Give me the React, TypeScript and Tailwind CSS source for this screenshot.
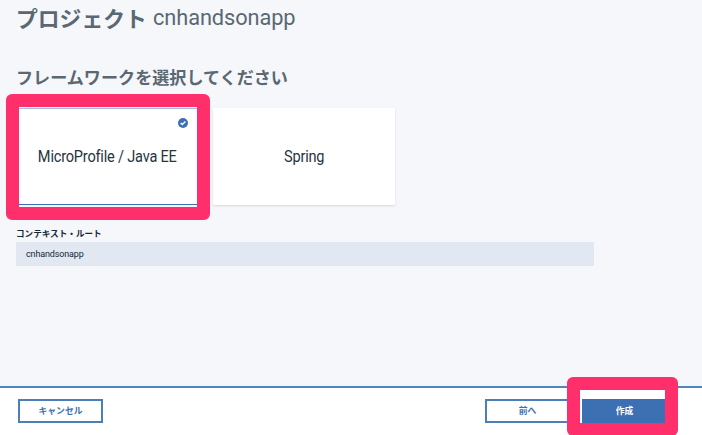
import type { ReactNode } from 'react';

const jp = "font-['Noto_Sans_CJK_JP',sans-serif]";
const latin = "font-['Roboto','Noto_Sans_CJK_JP',sans-serif]";

function CheckBadge() {
  return (
    <svg className="absolute right-[10px] top-[9px] size-[10px]" viewBox="0 0 10 10" fill="none">
      <circle cx="5" cy="5" r="5" fill="#3d70b2" />
      <path d="M2.7 5.1 4.3 6.6 7.4 3.5" stroke="#fff" strokeWidth="1.4" />
    </svg>
  );
}

function FrameworkCard({ selected = false, children }: { selected?: boolean; children: ReactNode }) {
  return (
    <div
      className={`relative flex h-[97px] w-[182px] items-center justify-center bg-white text-[16px] leading-none text-[#26343f] ${latin} ${
        selected ? 'border-b border-t border-b-[#3d70b2] border-t-[#a3bedb]' : 'shadow-[0_1px_2px_rgba(0,0,0,0.12)]'
      }`}
    >
      <span className="inline-block scale-x-[0.91] whitespace-nowrap tracking-[-0.22px]">{children}</span>
      {selected && <CheckBadge />}
    </div>
  );
}

export default function App() {
  return (
    <div className="relative flex h-[435px] w-[702px] flex-col overflow-hidden bg-[#f5f7fb]">
      <main className="flex h-[386px] flex-col items-start pl-[16px]">
        <h1 className="mt-[3px] flex h-[30px] items-center whitespace-nowrap text-[#5a6872]">
          <span className={`w-[137px] text-[21.8px] font-bold leading-[30px] ${jp}`}>プロジェクト</span>
          <span className={`origin-left scale-x-[0.99] text-[22px] font-normal leading-[30px] tracking-[-0.1px] ${latin}`}>cnhandsonapp</span>
        </h1>
        <h2 className={`mt-[32px] h-[24px] whitespace-nowrap text-[17.1px] font-bold leading-[24px] text-[#5a6872] ${jp}`}>
          フレームワークを選択してください
        </h2>
        <div className="mt-[19px] flex gap-[15px]">
          <FrameworkCard selected>MicroProfile / Java EE</FrameworkCard>
          <FrameworkCard>Spring</FrameworkCard>
        </div>
        <label className={`mt-[22px] h-[12px] whitespace-nowrap text-[8.6px] font-bold leading-[12px] text-[#152935] ${jp}`}>
          コンテキスト・ルート
        </label>
        <div className={`mt-[3px] flex h-[24px] w-[578px] items-center bg-[#e1e8f2] pl-[10px] pt-px text-[9px] tracking-[-0.14px] text-[#152935] ${latin}`}>
          cnhandsonapp
        </div>
      </main>
      <footer className={`flex h-[49px] items-start border-t-2 border-[#5284be] bg-white pl-[18px] text-[8.8px] font-bold text-[#3d70b2] ${jp}`}>
        <button className="mt-[11px] flex h-[24px] w-[85px] items-center justify-center border-2 border-[#4c7fba]">キャンセル</button>
        <button className="ml-[382px] mt-[11px] flex h-[24px] w-[85px] items-center justify-center border-2 border-[#4c7fba]">前へ</button>
        <button className="ml-[12px] mt-[11px] flex h-[24px] w-[85px] items-center justify-center bg-[#3d70b2] text-white">作成</button>
      </footer>
      <div className="absolute left-[6px] top-[94px] h-[126px] w-[204px] rounded-[6px] border-[13px] border-[#ff2f6c]" />
      <div className="absolute left-[567px] top-[377px] h-[59px] w-[111px] rounded-[6px] border-[13px] border-[#ff2f6c]" />
    </div>
  );
}
